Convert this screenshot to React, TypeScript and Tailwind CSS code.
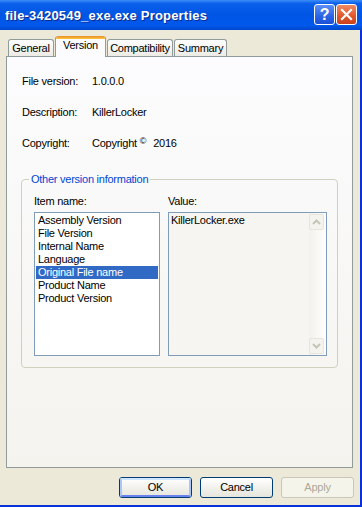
import React from 'react';

const tabs = [
  { label: 'General', w: 'w-[46px]' },
  { label: 'Version', w: 'w-[51px]', active: true },
  { label: 'Compatibility', w: 'w-[66px]' },
  { label: 'Summary', w: 'w-[53px]' },
];

const infoRows = [
  { label: 'File version:', value: <span>1.0.0.0</span> },
  { label: 'Description:', value: <span>KillerLocker</span> },
  {
    label: 'Copyright:',
    value: (
      <span>
        Copyright<span className="ml-[3px] mr-[7px] text-[9px] relative top-[-3px]">©</span>2016
      </span>
    ),
  },
];

const items = [
  'Assembly Version',
  'File Version',
  'Internal Name',
  'Language',
  'Original File name',
  'Product Name',
  'Product Version',
];

const TitleBar = () => (
  <div className="h-[30px] flex items-start bg-[linear-gradient(to_bottom,#3c8df8_0%,#0a5fea_12%,#0055e4_50%,#0058ec_85%,#0046c9_100%)]">
    <div className="mt-[8px] ml-[5px] leading-[16px] text-[13px] font-bold tracking-[0.2px] text-white [text-shadow:1px_1px_0_#0b2a8c]">
      file-3420549_exe.exe Properties
    </div>
    <div className="ml-auto mt-[4px] mr-[5px] flex gap-[1px]">
      <div className="w-[21px] h-[21px] rounded-[3px] border border-white bg-[linear-gradient(to_bottom,#5c8ff5,#2a63e6_60%,#1a50d6)] flex items-center justify-center text-white font-bold text-[16px] leading-none">
        ?
      </div>
      <div className="w-[21px] h-[21px] rounded-[3px] border border-white bg-[linear-gradient(to_bottom,#f08a63,#e2552a_60%,#c8411c)] flex items-center justify-center">
        <svg width="13" height="13" viewBox="0 0 13 13">
          <path d="M2 2 L11 11 M11 2 L2 11" stroke="white" strokeWidth="2.2" strokeLinecap="square" />
        </svg>
      </div>
    </div>
  </div>
);

const Tab = ({ label, w, active }: { label: string; w: string; active?: boolean }) =>
  active ? (
    <div className={`${w} ml-[1px] h-[21px] -mb-px relative z-10 bg-[#fcfcfe] border-x border-[#919b9c] rounded-t-[3px] overflow-hidden`}>
      <div className="h-[3px] bg-[linear-gradient(to_bottom,#e68b2c,#ffc73c)]" />
      <div className="text-center leading-[13px]">{label}</div>
    </div>
  ) : (
    <div className={`${w} ml-[1px] first:ml-0 h-[17px] border border-b-0 border-[#919b9c] rounded-t-[3px] bg-linear-to-b from-[#fefefe] to-[#ecebe5] text-center leading-[13px] pt-[2px] whitespace-nowrap`}>
      {label}
    </div>
  );

const ScrollArrow = ({ up }: { up?: boolean }) => (
  <div className="w-[15px] h-[16px] rounded-[2px] border border-[#e6e6dd] bg-[#f4f3ee] flex items-center justify-center">
    <svg width="9" height="6" viewBox="0 0 9 6">
      <path d={up ? 'M1 5 L4.5 1.5 L8 5' : 'M1 1 L4.5 4.5 L8 1'} stroke="#c5c5ba" strokeWidth="2" fill="none" />
    </svg>
  </div>
);

const Button = ({ label, kind }: { label: string; kind?: 'default' | 'disabled' }) => {
  if (kind === 'disabled')
    return (
      <div className="w-[73px] h-[21px] rounded-[3px] border border-[#c9c7ba] bg-[#f5f4ea] text-[#aca899] flex items-center justify-center">
        {label}
      </div>
    );
  return (
    <div className="w-[73px] h-[21px] rounded-[3px] border border-[#003c74] bg-linear-to-b from-[#ffffff] to-[#e5e4dc] flex items-center justify-center">
      <div
        className={`w-full h-full rounded-[2px] flex items-center justify-center ${
          kind === 'default' ? 'border-2 border-t-[#cee7ff] border-l-[#a8c6f7] border-r-[#a8c6f7] border-b-[#6982ee]' : ''
        }`}
      >
        {label}
      </div>
    </div>
  );
};

export default function App() {
  return (
    <div className="w-[362px] h-[507px] flex flex-col bg-[#ece9d8] text-[11px] tracking-[-0.25px] text-black font-['Liberation_Sans',Arial,sans-serif]">
      <TitleBar />
      <div className="flex-1 flex flex-col border-r-2 border-b-2 border-[#0831d9] pl-[6px]">
        <div className="mt-[6px] h-[20px] flex items-end pl-[2px]">
          {tabs.map((t) => (
            <Tab key={t.label} {...t} />
          ))}
        </div>

        <div className="w-[347px] h-[412px] border border-[#919b9c] bg-linear-to-b from-[#fcfcfe] to-[#f4f3ee] px-[14px] pt-[18px]">
          <div className="flex flex-col gap-[18px]">
            {infoRows.map((r) => (
              <div key={r.label} className="flex leading-[13px] ml-[1px]">
                <div className="w-[70px]">{r.label}</div>
                {r.value}
              </div>
            ))}
          </div>

          <fieldset className="mt-[22px] w-[317px] border border-[#d0d0bf] rounded-[4px] pl-[7px] pb-[11px]">
            <legend className="px-[2px] leading-[13px] text-[#0046d5]">Other version information</legend>
            <div className="ml-[5px] mt-[9px] flex gap-[8px]">
              <div className="flex flex-col">
                <div className="leading-[13px] mb-[4px]">Item name:</div>
                <div className="w-[126px] h-[144px] border border-[#7f9db9] bg-white px-[1px] pt-[1px]">
                  {items.map((it) => (
                    <div
                      key={it}
                      className={`h-[13px] leading-[13px] pl-[2px] ${
                        it === 'Original File name' ? 'bg-[#316ac5] text-white' : ''
                      }`}
                    >
                      {it}
                    </div>
                  ))}
                </div>
              </div>
              <div className="flex flex-col">
                <div className="leading-[13px] mb-[4px]">Value:</div>
                <div className="w-[159px] h-[144px] border border-[#7f9db9] bg-[#f6f5f1] flex">
                  <div className="flex-1 pl-[2px] pt-[1px] leading-[13px]">KillerLocker.exe</div>
                  <div className="w-[17px] flex flex-col justify-between py-[1px] bg-linear-to-r from-[#f3f1ec] to-[#fefefe]">
                    <ScrollArrow up />
                    <ScrollArrow />
                  </div>
                </div>
              </div>
            </div>
          </fieldset>
        </div>

        <div className="mt-[9px] flex justify-end gap-[8px] pr-[6px]">
          <Button label="OK" kind="default" />
          <Button label="Cancel" />
          <Button label="Apply" kind="disabled" />
        </div>
      </div>
    </div>
  );
}
